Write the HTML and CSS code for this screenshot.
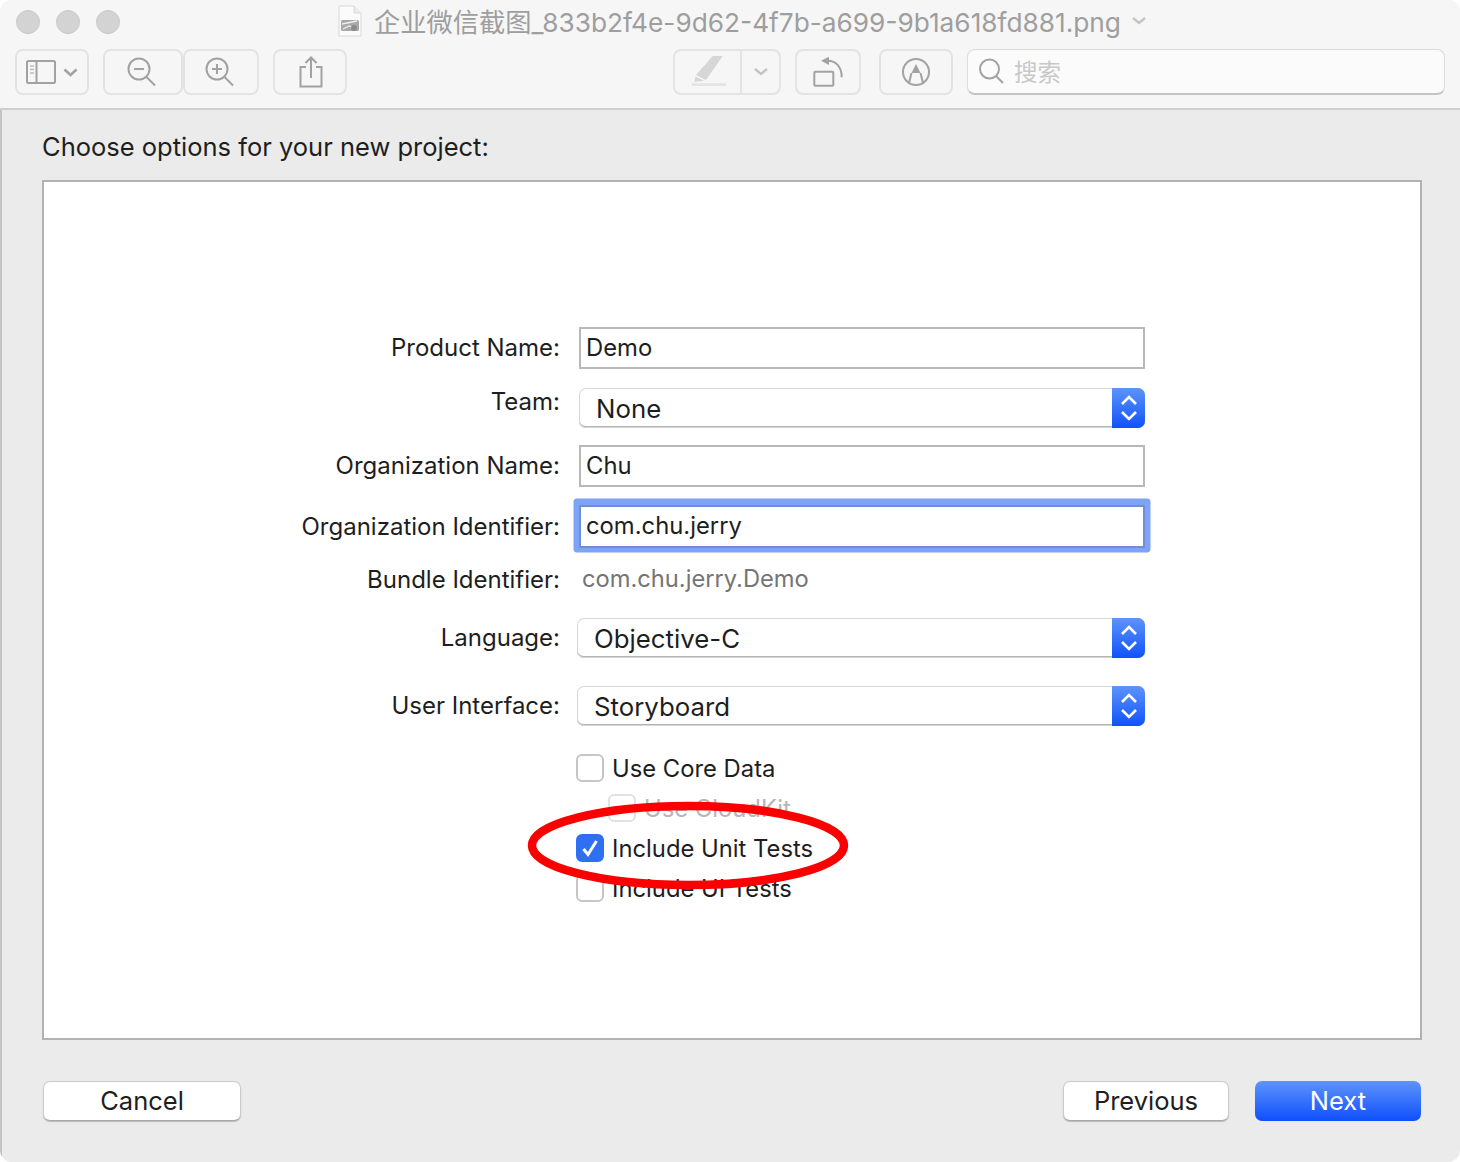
FILE: index.html
```html
<!DOCTYPE html>
<html lang="en">
<head>
  <meta charset="UTF-8">
  <title>Choose options for your new project</title>
  <link rel="stylesheet" href="styles.css">
</head>
<body>
  <div class="window">
    <header class="toolbar">
      <div class="title-row">
        <div class="lights"><i></i><i></i><i></i></div>
        <div class="title">
          <svg class="doc-icon" width="24" height="32" viewBox="0 0 24 32">
            <path d="M1 1h15l7 7v23H1z" fill="#fbfbfb" stroke="#d8d8d8"/>
            <path d="M16 1v7h7" fill="#ececec" stroke="#d8d8d8"/>
            <rect x="3" y="15" width="18" height="11" rx="1.500" fill="#a8a8a8"/>
            <path d="M4 19l15-3M5 24l6-3 8 3" stroke="#eee" stroke-width="1.300" fill="none"/>
            <circle cx="16" cy="23" r="3" fill="#8a8a8a"/>
          </svg>
          <span class="title-text">企业微信截图_833b2f4e-9d62-4f7b-a699-9b1a618fd881.png</span>
          <svg class="title-chevron" width="16" height="10" viewBox="0 0 16 10"><path d="M2 2l6 5 6-5" fill="none" stroke="#c4c4c4" stroke-width="2.400"/></svg>
        </div>
      </div>
      <div class="tools">
        <div class="tool tool-sidebar">
          <svg width="62" height="26" viewBox="0 0 62 26" fill="none" stroke="#a2a2a2">
            <rect x="11" y="2" width="28" height="22" rx="1.500" stroke-width="2"/>
            <path d="M20.500 2v22" stroke-width="2"/>
            <path d="M14 7h4M14 10.500h4M14 14h4" stroke="#bdbdbd" stroke-width="1.600"/>
            <path d="M48.500 10.500l6 5.500 6-5.500" stroke-width="2.600"/>
          </svg>
        </div>
        <div class="tool tool-zoomout">
          <svg width="30" height="30" viewBox="0 0 30 30" fill="none" stroke="#a2a2a2" stroke-width="2">
            <circle cx="12" cy="12" r="10.500"/><path d="M19.500 20l8.500 8.500M7 12h10"/>
          </svg>
        </div>
        <div class="tool tool-zoomin">
          <svg width="30" height="30" viewBox="0 0 30 30" fill="none" stroke="#a2a2a2" stroke-width="2">
            <circle cx="12" cy="12" r="10.500"/><path d="M19.500 20l8.500 8.500M7 12h10M12 7v10"/>
          </svg>
        </div>
        <div class="tool tool-share">
          <svg width="24" height="32" viewBox="0 0 24 32" fill="none" stroke="#a2a2a2" stroke-width="2">
            <path d="M7 11H1.500v19.500h21V11H17M12 22V2M6.500 7L12 1.500 17.500 7"/>
          </svg>
        </div>
        <div class="spacer"></div>
        <div class="tool tool-pen">
          <svg width="36" height="32" viewBox="0 0 36 32">
            <path d="M22.700 0h10L16 24 6 19z" fill="#d6d6d6"/>
            <path d="M5.500 20.500L14 24.800 4.300 26z" fill="#d6d6d6"/>
            <rect x="1.700" y="27.300" width="34.300" height="2.700" fill="#e4e4e4"/>
          </svg>
        </div>
        <div class="tool tool-penmenu">
          <svg width="16" height="10" viewBox="0 0 16 10"><path d="M2 2l6 5 6-5" fill="none" stroke="#c4c4c4" stroke-width="2.400"/></svg>
        </div>
        <div class="tool tool-rotate">
          <svg width="30" height="32" viewBox="0 0 30 32" fill="none" stroke="#a2a2a2" stroke-width="2">
            <rect x="1.300" y="15.700" width="19" height="14" rx="1"/>
            <path d="M15 4.700c8 0 13.700 6.300 13.700 16.600"/>
            <path d="M16 .7L8 4.700 16 9z" fill="#a2a2a2" stroke="none"/>
          </svg>
        </div>
        <div class="tool tool-markup">
          <svg width="30" height="30" viewBox="0 0 30 30" fill="none" stroke="#a2a2a2" stroke-width="2">
            <circle cx="15" cy="15" r="13"/>
            <path d="M10.500 16L8 26M19.500 16L22 26"/>
            <path d="M15 7l-4.500 9h9z" fill="#a2a2a2" stroke="none"/>
          </svg>
        </div>
        <div class="search">
          <svg width="26" height="26" viewBox="0 0 26 26" fill="none" stroke="#a2a2a2" stroke-width="2">
            <circle cx="10.500" cy="11" r="9.500"/><path d="M17 18l7 7"/>
          </svg>
          <span class="search-text">搜索</span>
        </div>
      </div>
    </header>

    <main class="sheet">
      <h1 class="sheet-title">Choose options for your new project:</h1>

      <section class="panel">
        <div class="row row-product">
          <label class="row-label">Product Name:</label>
          <div class="text-field">Demo</div>
        </div>
        <div class="row row-team">
          <label class="row-label label-up">Team:</label>
          <div class="select select-team"><span>None</span><b class="stepper"><svg width="18" height="30" viewBox="0 0 18 30" fill="none" stroke="#fff" stroke-width="2.600"><path d="M2 11l7-7 7 7M2 19l7 7 7-7"/></svg></b></div>
        </div>
        <div class="row row-org">
          <label class="row-label">Organization Name:</label>
          <div class="text-field">Chu</div>
        </div>
        <div class="row row-ident">
          <label class="row-label">Organization Identifier:</label>
          <div class="text-field is-focused">com.chu.jerry</div>
        </div>
        <div class="row row-bundle">
          <label class="row-label">Bundle Identifier:</label>
          <div class="static-value">com.chu.jerry.Demo</div>
        </div>
        <div class="row row-language">
          <label class="row-label">Language:</label>
          <div class="select"><span>Objective-C</span><b class="stepper"><svg width="18" height="30" viewBox="0 0 18 30" fill="none" stroke="#fff" stroke-width="2.600"><path d="M2 11l7-7 7 7M2 19l7 7 7-7"/></svg></b></div>
        </div>
        <div class="row row-ui">
          <label class="row-label">User Interface:</label>
          <div class="select"><span>Storyboard</span><b class="stepper"><svg width="18" height="30" viewBox="0 0 18 30" fill="none" stroke="#fff" stroke-width="2.600"><path d="M2 11l7-7 7 7M2 19l7 7 7-7"/></svg></b></div>
        </div>

        <div class="checks">
          <div class="check"><i class="box"></i><span>Use Core Data</span></div>
          <div class="check check-sub is-disabled"><i class="box"></i><span>Use CloudKit</span></div>
          <div class="check"><i class="box is-on"><svg width="20" height="20" viewBox="0 0 20 20" fill="none" stroke="#fff" stroke-width="3"><path d="M3.500 11l4.500 5.500L16.500 3"/></svg></i><span>Include Unit Tests</span></div>
          <div class="check"><i class="box"></i><span>Include UI Tests</span></div>
        </div>
      </section>

      <footer class="actions">
        <button class="btn btn-cancel">Cancel</button>
        <div class="actions-right">
          <button class="btn btn-prev">Previous</button>
          <button class="btn btn-next">Next</button>
        </div>
      </footer>

      <svg class="red-ring" width="324" height="92" viewBox="0 0 324 92">
        <ellipse cx="162" cy="45.500" rx="156" ry="39.500" fill="none" stroke="#fb0000" stroke-width="8.500"/>
      </svg>
    </main>
  </div>
</body>
</html>
```

FILE: styles.css
```css
/* Global */
*, *::before, *::after { box-sizing: border-box; }
html, body { margin: 0; height: 100%; background: #fff; }
body { font-family: Inter, "Noto Sans CJK SC", sans-serif; color: #1e1e1e; }

.window {
  position: relative;
  width: 1460px;
  height: 1162px;
  border-radius: 12px;
  overflow: hidden;
  background: #ebebeb;
  display: flex;
  flex-direction: column;
}

/* Toolbar */
.toolbar {
  height: 110px;
  background: #f6f6f6;
  border-bottom: 2px solid #cfcfcf;
  flex: none;
}
.title-row { height: 49px; display: flex; align-items: center; position: relative; padding-top: 2px; }
.lights { display: flex; gap: 16px; padding-left: 16px; margin-top: -7px; }
.lights i {
  width: 24px;
  height: 24px;
  border-radius: 50%;
  background: #d3d3d3;
  border: 1px solid #c8c8c8;
}
.title {
  position: absolute;
  left: 338px;
  top: 5px;
  display: flex;
  align-items: center;
  height: 32px;
}
.doc-icon { margin-right: 12px; }
.title-text { font-size: 26.250px; color: #9e9e9e; white-space: nowrap; }
.title-chevron { margin-left: 10px; }

.tools { display: flex; padding: 0 15px; height: 46px; }
.tool {
  height: 46px;
  border: 2px solid #e3e3e3;
  border-radius: 8px;
  background: #f6f6f6;
  display: flex;
  align-items: center;
  justify-content: center;
  flex: none;
}
.tool-sidebar { width: 74px; margin-right: 14px; justify-content: flex-start; }
.tool-sidebar svg { margin-left: -1px; }
.tool-zoomout { width: 80px; padding-right: 2px; }
.tool-zoomin { width: 76px; margin-right: 14px; padding-right: 2px; }
.tool-share { width: 74px; padding-left: 2px; }
.spacer { flex: 1; }
.tool-pen { width: 68px; border-radius: 8px 0 0 8px; border-right-width: 1px; }
.tool-penmenu { width: 40px; border-radius: 0 8px 8px 0; border-left-width: 1px; margin-right: 14px; }
.tool-rotate { width: 66px; margin-right: 18px; }
.tool-markup { width: 74px; margin-right: 14px; }
.search {
  width: 478px;
  height: 46px;
  background: #fbfbfb;
  border: 1px solid #dcdcdc;
  border-bottom: 2px solid #c4c4c4;
  border-radius: 8px;
  display: flex;
  align-items: center;
  padding: 0 0 2px 11px;
}
.search-text { font-size: 23.500px; color: #c8c8c8; margin-left: 9px; }

/* Sheet */
.sheet { flex: 1; padding: 0 38px 0 40px; border-left: 2px solid #c4c4c4; position: relative; }
.sheet-title { font-size: 25.500px; font-weight: 400; margin: 0; height: 70px; line-height: 74px; color: #1e1e1e; }

.panel {
  height: 860px;
  background: #fff;
  border: 2px solid #b2b2b2;
  padding-top: 145px;
}

/* Form rows */
.row { display: flex; align-items: center; font-size: 24px; }
.row-label { width: 516px; text-align: right; flex: none; padding-bottom: 1px; }
.label-up { position: relative; top: -6px; }
.row-product { height: 42px; }
.row-team { height: 40px; margin-top: 19px; }
.row-org { height: 42px; margin-top: 17px; }
.row-ident { height: 43px; margin-top: 18px; }
.row-bundle { height: 28px; margin-top: 18px; }
.row-language { height: 40px; margin-top: 24px; }
.row-ui { height: 40px; margin-top: 28px; }

.text-field {
  width: 566px;
  height: 100%;
  margin-left: 19px;
  background: #fff;
  border: 2px solid #b8b8b8;
  padding: 0 0 1px 5px;
  display: flex;
  align-items: center;
  font-size: 23.800px;
}
.text-field.is-focused {
  border-color: #6e8fd8;
  box-shadow: 0 -1px 0 5.500px #7ea3f7;
  border-radius: 1px;
  padding-bottom: 3px;
}
.static-value { margin-left: 22px; color: #757575; font-size: 23.700px; padding-bottom: 3px; }

.select {
  flex: 1;
  max-width: 568px;
  height: 40px;
  margin-left: 17px;
  background: #fff;
  border-radius: 7px;
  box-shadow: inset 0 0 0 1px #d6d6d6, inset 0 -2px 0 0 #b4b4b4;
  display: flex;
  align-items: center;
  justify-content: space-between;
  padding: 1px 0 0 17px;
  font-size: 25.800px;
  overflow: hidden;
}
.select-team { max-width: 566px; margin-left: 19px; }
.stepper {
  width: 33px;
  height: 40px;
  margin-top: -1px;
  background: linear-gradient(#5e94fb, #0f52fb);
  display: flex;
  align-items: center;
  justify-content: center;
}

/* Checkboxes */
.checks { margin: 28px 0 0 532px; display: flex; flex-direction: column; gap: 12px; }
.check { display: flex; align-items: center; height: 28px; font-size: 23.800px; }
.check span { margin-left: 8px; }
.box {
  width: 28px;
  height: 28px;
  flex: none;
  background: #fff;
  border: 2px solid #c6c6c6;
  border-radius: 6px;
  display: flex;
  align-items: center;
  justify-content: center;
}
.box.is-on { background: #2f6ff2; border-color: #2f6ff2; }
.check-sub { margin-left: 32px; }
.check.is-disabled { color: #b6b6b6; }
.check.is-disabled .box { border-color: #e2e2e2; }

/* Footer */
.actions { display: flex; justify-content: space-between; align-items: center; margin-top: 41px; padding: 0 1px; }
.actions-right { display: flex; gap: 26px; }
.btn {
  font: inherit;
  font-size: 25.500px;
  height: 40px;
  padding: 0 0 2px;
  border: 1px solid #cbcbcb;
  border-bottom-color: #a8a8a8;
  border-radius: 7px;
  background: #fff;
  color: #1e1e1e;
  box-shadow: 0 1px 1px #bbb;
}
.btn-cancel { width: 198px; }
.btn-prev { width: 166px; }
.btn-next {
  width: 166px;
  color: #fff;
  border: none;
  background: linear-gradient(#5e94fb, #0f4ffb);
  box-shadow: none;
}

/* Hand-drawn annotation on top of the checkboxes */
.red-ring { position: absolute; left: 524px; top: 690px; }
```
